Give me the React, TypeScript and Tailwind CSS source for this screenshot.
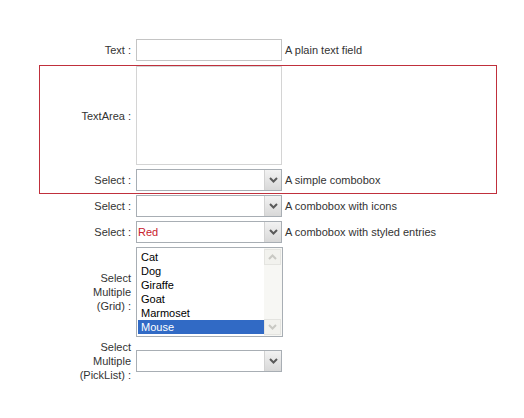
import React from "react";

const animals = ["Cat", "Dog", "Giraffe", "Goat", "Marmoset", "Mouse"];

const Chevron = ({ faint }: { faint?: boolean }) => (
  <svg width="9" height="6" viewBox="0 0 9 6">
    <path
      d="M1 1 L4.5 4.5 L8 1"
      fill="none"
      stroke={faint ? "#c9c9c4" : "#5a5a5a"}
      strokeWidth="2"
    />
  </svg>
);

const Combo = ({ value }: { value?: string }) => (
  <div className="flex h-[22px] w-[146px] border border-[#a8aeb4] bg-white">
    <div className="flex flex-1 items-center pl-[1px] text-[#c8202c]">
      {value}
    </div>
    <div className="flex w-[17px] items-center justify-center border-l border-[#d2d2d2] bg-gradient-to-b from-[#f2f2f2] to-[#d8d8d8]">
      <Chevron />
    </div>
  </div>
);

const Row = ({
  label,
  help,
  labelWidth = "w-[92px]",
  children,
}: {
  label: React.ReactNode;
  help?: string;
  labelWidth?: string;
  children: React.ReactNode;
}) => (
  <div className="flex items-center">
    <div className={`${labelWidth} shrink-0 pr-[5px] text-right leading-[14px]`}>
      {label}
    </div>
    {children}
    {help && <div className="pl-[3px]">{help}</div>}
  </div>
);

export default function App() {
  return (
    <div
      className="min-h-[418px] w-[524px] bg-white pt-[39px] pl-[39px] text-[11px] text-[#333]"
      style={{ fontFamily: '"Liberation Sans", Arial, sans-serif' }}
    >
      <Row label="Text :" help="A plain text field" labelWidth="w-[97px]">
        <div className="h-[22px] w-[146px] border border-[#c4c4c4] bg-white" />
      </Row>

      <div className="mt-[4px] w-[458px] border border-[#c0303c] pb-[2px]">
        <Row label="TextArea :" labelWidth="w-[96px]">
          <div className="h-[99px] w-[146px] border border-[#d4d4d4] bg-white" />
        </Row>
        <div className="mt-[4px]">
          <Row label="Select :" help="A simple combobox" labelWidth="w-[96px]">
            <Combo />
          </Row>
        </div>
      </div>

      <div className="mt-[1px]">
        <Row label="Select :" help="A combobox with icons" labelWidth="w-[97px]">
          <Combo />
        </Row>
      </div>
      <div className="mt-[4px]">
        <Row
          label="Select :"
          help="A combobox with styled entries"
          labelWidth="w-[97px]"
        >
          <Combo value="Red" />
        </Row>
      </div>

      <div className="mt-[4px]">
        <Row
          label={
            <>
              Select
              <br />
              Multiple
              <br />
              (Grid) :
            </>
          }
          labelWidth="w-[97px]"
        >
          <div className="flex h-[90px] w-[147px] border border-[#a8aeb4] bg-white">
            <div className="flex-1 pt-[2px] pl-[1px]">
              {animals.map((a) => (
                <div
                  key={a}
                  className={`h-[14px] pl-[3px] leading-[14px] ${
                    a === "Mouse" ? "bg-[#316ac5] text-white" : "text-black"
                  }`}
                >
                  {a}
                </div>
              ))}
            </div>
            <div className="flex w-[18px] flex-col justify-between bg-[#f7f7f4] py-[1px] pr-[1px]">
              <div className="flex h-[16px] items-center justify-center border border-[#e4e4e0] bg-[#f2f2ee]">
                <div className="rotate-180">
                  <Chevron faint />
                </div>
              </div>
              <div className="flex h-[16px] items-center justify-center border border-[#e4e4e0] bg-[#f2f2ee]">
                <Chevron faint />
              </div>
            </div>
          </div>
        </Row>
      </div>

      <div className="mt-[3px]">
        <Row
          label={
            <>
              Select
              <br />
              Multiple
              <br />
              (PickList) :
            </>
          }
          labelWidth="w-[97px]"
        >
          <Combo />
        </Row>
      </div>
    </div>
  );
}
